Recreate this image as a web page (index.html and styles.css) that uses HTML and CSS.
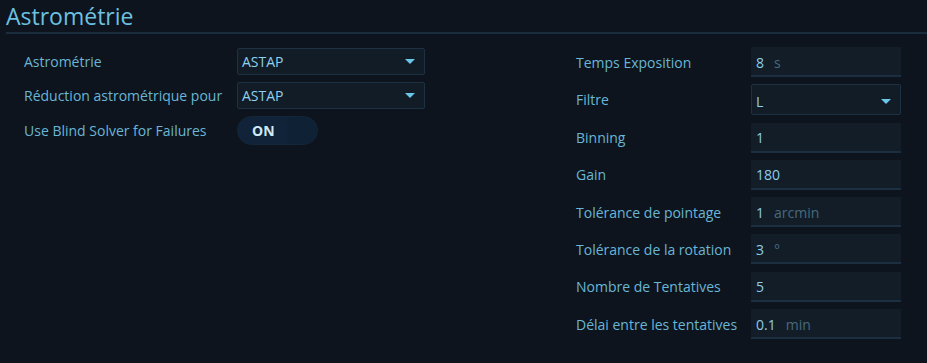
FILE: index.html
```html
<!DOCTYPE html>
<html lang="fr">
<head>
    <meta charset="UTF-8">
    <meta name="viewport" content="width=device-width, initial-scale=1.0">
    <title>Astrométrie</title>
    <link rel="stylesheet" href="styles.css">
</head>
<body>
    <div class="section">
        <!-- titre -->
        <h2 class="section-title">Astrométrie</h2>

        <div class="columns">
            <!-- colonne gauche -->
            <div class="col col-left">
                <div class="row">
                    <span class="label">Astrométrie</span>
                    <div class="select">ASTAP<span class="caret"></span></div>
                </div>
                <div class="row">
                    <span class="label">Réduction astrométrique pour</span>
                    <div class="select">ASTAP<span class="caret"></span></div>
                </div>
                <div class="row">
                    <span class="label">Use Blind Solver for Failures</span>
                    <div class="toggle"><span class="toggle-text">ON</span><span class="toggle-knob"></span></div>
                </div>
            </div>

            <!-- colonne droite -->
            <div class="col col-right">
                <div class="row">
                    <span class="label">Temps Exposition</span>
                    <div class="input"><span class="value">8</span><span class="unit">s</span></div>
                </div>
                <div class="row">
                    <span class="label">Filtre</span>
                    <div class="select select-wide">L<span class="caret"></span></div>
                </div>
                <div class="row">
                    <span class="label">Binning</span>
                    <div class="input"><span class="value">1</span></div>
                </div>
                <div class="row">
                    <span class="label">Gain</span>
                    <div class="input"><span class="value">180</span></div>
                </div>
                <div class="row">
                    <span class="label">Tolérance de pointage</span>
                    <div class="input"><span class="value">1</span><span class="unit">arcmin</span></div>
                </div>
                <div class="row">
                    <span class="label">Tolérance de la rotation</span>
                    <div class="input"><span class="value">3</span><span class="unit">°</span></div>
                </div>
                <div class="row">
                    <span class="label">Nombre de Tentatives</span>
                    <div class="input"><span class="value">5</span></div>
                </div>
                <div class="row">
                    <span class="label">Délai entre les tentatives</span>
                    <div class="input"><span class="value">0.1</span><span class="unit">min</span></div>
                </div>
            </div>
        </div>
    </div>
</body>
</html>
```

FILE: styles.css
```css
body {
    margin: 0;
    padding: 0;
    background-color: #0d141d;
    font-family: "Open Sans", "Noto Sans", sans-serif;
    color: #6bb8d8;
    overflow: hidden;
}

/* bloc principal */
.section {
    padding: 0 0 0 6px;
}

.section-title {
    margin: 0;
    padding: 2px 0 0 0;
    height: 34px;
    box-sizing: border-box;
    font-size: 23px;
    font-weight: 400;
    line-height: 28px;
    color: #6cc0e0;
    border-bottom: 2px solid #1a2d3d;
}

.columns {
    display: flex;
    align-items: flex-start;
    padding: 14px 0 0 18px;
}

.col {
    display: flex;
    flex-direction: column;
}

.col-left {
    width: 401px;
    gap: 7px;
}

.col-right {
    margin: -1px 0 0 151px;
    width: 325px;
    gap: 7.3px;
}

/* lignes */
.row {
    display: flex;
    align-items: center;
    justify-content: space-between;
}

.label {
    font-size: 14px;
    color: #6ab6d6;
    white-space: nowrap;
}

/* liste déroulante */
.select {
    width: 188px;
    height: 27px;
    box-sizing: border-box;
    border: 1px solid #1d3143;
    border-radius: 2px;
    background-color: #111c27;
    display: flex;
    align-items: center;
    justify-content: space-between;
    padding: 0 9px 0 4px;
    font-size: 14px;
    color: #8ed0ee;
}

.select-wide {
    width: 150px;
    height: 31px;
    padding-top: 3px;
}

.caret {
    width: 0;
    height: 0;
    border-left: 5px solid transparent;
    border-right: 5px solid transparent;
    border-top: 5px solid #6cc6e8;
}

/* interrupteur */
.toggle {
    width: 81px;
    height: 29px;
    margin-right: 107px;
    box-sizing: border-box;
    border: 1px solid #152638;
    border-radius: 15px;
    background-color: #102338;
    display: flex;
    align-items: center;
    overflow: hidden;
}

.toggle-text {
    padding-left: 14px;
    font-size: 14px;
    font-weight: 700;
    color: #cfeaf6;
    flex: 1;
}

.toggle-knob {
    width: 30px;
    height: 100%;
    background-color: #0f2135;
}

/* champ de saisie */
.input {
    width: 150px;
    height: 30px;
    box-sizing: border-box;
    background-color: #121d28;
    border-bottom: 2px solid #1b2f40;
    display: flex;
    align-items: center;
    gap: 10px;
    padding: 2px 0 0 5px;
    font-size: 14px;
}

.value {
    color: #8ccdea;
}

.unit {
    color: #486a7c;
}
```
